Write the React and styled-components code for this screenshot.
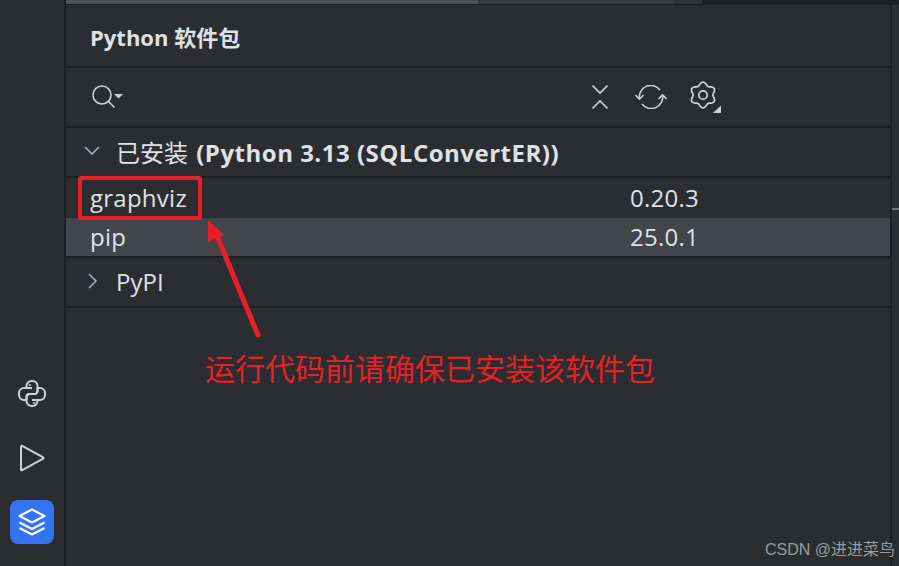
import React from "react";
import styled, { createGlobalStyle } from "styled-components";

const GlobalStyle = createGlobalStyle`
  html, body {
    margin: 0;
    padding: 0;
    background: #2b2d30;
  }
  body {
    width: 899px;
    height: 566px;
    overflow: hidden;
    font-family: "Open Sans", "Noto Sans CJK SC", sans-serif;
  }
`;

const Page = styled.div`
  position: relative;
  display: flex;
  width: 899px;
  height: 566px;
  overflow: hidden;
  background: #2b2d30;
  color: #dfe1e5;
`;

const Rail = styled.nav`
  width: 66px;
  flex: none;
  box-sizing: border-box;
  display: flex;
  flex-direction: column;
  align-items: center;
  gap: 20px;
  padding-bottom: 22px;
  justify-content: flex-end;
  border-right: 2px solid #1e1f22;
`;

const RailButton = styled.div`
  width: 44px;
  height: 44px;
  border-radius: 8px;
  display: flex;
  align-items: center;
  justify-content: center;
  background: ${(p) => (p.$active ? "#3574f0" : "transparent")};
  color: ${(p) => (p.$active ? "#ffffff" : "#ced0d6")};
`;

const Main = styled.main`
  flex: 1;
  display: flex;
  flex-direction: column;
  min-width: 0;
`;

const TopStrip = styled.div`
  height: 5px;
  flex: none;
  display: flex;
  background: #1e1f22;
`;

const StripPart = styled.div`
  width: ${(p) => p.$width}px;
  height: 4px;
  background: ${(p) => p.$color};
`;

const Body = styled.div`
  flex: 1;
  display: flex;
  min-height: 0;
`;

const Panel = styled.section`
  width: 824px;
  flex: none;
  display: flex;
  flex-direction: column;
`;

const Gutter = styled.div`
  flex: 1;
  border-left: 2px solid #1e1f22;
  padding-top: 203px;
`;

const GutterTick = styled.div`
  height: 2px;
  background: #6f737a;
`;

const TitleBar = styled.header`
  height: 63px;
  flex: none;
  box-sizing: border-box;
  display: flex;
  align-items: center;
  padding-left: 24px;
  font-size: 22px;
  font-weight: 700;
  border-bottom: 2px solid #1e1f22;
`;

const Toolbar = styled.div`
  height: 60px;
  flex: none;
  box-sizing: border-box;
  display: flex;
  align-items: center;
  padding: 0 0 0 25px;
  border-bottom: 2px solid #1e1f22;
  color: #ced0d6;
`;

const ToolGroup = styled.div`
  margin-left: auto;
  margin-right: 168px;
  display: flex;
  align-items: center;
`;

const ToolSlot = styled.div`
  display: flex;
  margin-left: ${(p) => p.$gap || 0}px;
`;

const GroupRow = styled.div`
  flex: none;
  box-sizing: border-box;
  height: ${(p) => p.$height}px;
  display: flex;
  align-items: center;
  gap: 15px;
  padding: 0 0 2px 17px;
  font-size: 24px;
  border-bottom: 2px solid #1e1f22;
`;

const GroupName = styled.span`
  font-weight: 400;
  white-space: nowrap;
`;

const GroupDetail = styled.b`
  font-weight: 700;
  letter-spacing: 0.5px;
  margin-left: 2px;
`;

const PackageRow = styled.div`
  flex: none;
  box-sizing: border-box;
  height: ${(p) => p.$height}px;
  display: grid;
  grid-template-columns: 540px 1fr;
  align-items: center;
  padding: 0 0 2px 24px;
  font-size: 24px;
  letter-spacing: 0.25px;
  background: ${(p) => (p.$selected ? "#43454a" : "transparent")};
  border-bottom: ${(p) => (p.$selected ? "2px solid #1e1f22" : "0")};
`;

const Annotations = styled.svg`
  position: absolute;
  left: 0;
  top: 0;
  pointer-events: none;
`;

const Callout = styled.div`
  position: absolute;
  left: 205px;
  top: 347px;
  font-family: "Noto Sans CJK SC", sans-serif;
  font-size: 30px;
  line-height: 40px;
  color: #e81f27;
  white-space: nowrap;
`;

const Watermark = styled.div`
  position: absolute;
  right: 4px;
  top: 540px;
  font-family: "Liberation Sans", "Noto Sans CJK SC", sans-serif;
  font-size: 16px;
  line-height: 20px;
  color: #9a9b9e;
  white-space: nowrap;
`;

// six soft lobes, one pointing straight up
const gearPath = () => {
  const pts = [];
  for (let i = 0; i < 96; i++) {
    const t = (i / 96) * Math.PI * 2;
    const r = 11.4 + 1.5 * Math.cos(6 * t);
    pts.push(`${(13 + r * Math.sin(t)).toFixed(2)} ${(14 - r * Math.cos(t)).toFixed(2)}`);
  }
  return `M${pts.join("L")}z`;
};

const Chevron = ({ open }) => (
  <svg width="18" height="18" viewBox="0 0 18 18" fill="none" stroke="#a8adbd" strokeWidth="1.6">
    {open ? <path d="M2 5l7 7 7-7" /> : <path d="M6 2l7 7-7 7" />}
  </svg>
);

const PythonIcon = () => (
  <svg width="28" height="28" viewBox="0 0 28 28" fill="none" stroke="currentColor" strokeWidth="2" strokeLinejoin="round">
    <path d="M14 8H6a5 5 0 0 0-5 5v2a5 5 0 0 0 5 5h2.500v-3a3 3 0 0 1 3-3h5a3 3 0 0 0 3-3V6a5 5 0 0 0-5-5h-1a5 5 0 0 0-5 5v2" />
    <path d="M14 20h8a5 5 0 0 0 5-5v-2a5 5 0 0 0-5-5h-2.500v3a3 3 0 0 1-3 3h-5a3 3 0 0 0-3 3v4a5 5 0 0 0 5 5h1a5 5 0 0 0 5-5v-2" />
    <circle cx="12" cy="5" r="1.100" fill="currentColor" stroke="none" />
    <circle cx="16" cy="23" r="1.100" fill="currentColor" stroke="none" />
  </svg>
);

const PlayIcon = () => (
  <svg width="30" height="30" viewBox="0 0 30 30" fill="none" stroke="currentColor" strokeWidth="2" strokeLinejoin="round">
    <path d="M4 3.500v23a.8.8 0 0 0 1.200.7l21-11.500a.8.8 0 0 0 0-1.400L5.200 2.800A.8.8 0 0 0 4 3.500z" />
  </svg>
);

const LayersIcon = () => (
  <svg width="28" height="28" viewBox="0 0 28 28" fill="none" stroke="currentColor" strokeWidth="2" strokeLinejoin="round">
    <path d="M14 1.500L26.500 8 14 14.500 1.500 8z" />
    <path d="M1.500 14.500L14 21l12.500-6.500" />
    <path d="M1.500 20L14 26.500 26.500 20" />
  </svg>
);

const SearchIcon = () => (
  <svg width="34" height="26" viewBox="0 0 34 26" fill="none" stroke="currentColor" strokeWidth="1.6">
    <circle cx="11" cy="11" r="9" />
    <path d="M17.500 17.500l6 6" />
    <path d="M23 10h9l-4.500 4.500z" fill="currentColor" stroke="none" />
  </svg>
);

const CollapseIcon = () => (
  <svg width="16" height="24" viewBox="0 0 16 24" fill="none" stroke="currentColor" strokeWidth="1.600">
    <path d="M0.500 0.500L8 8l7.500-7.500" />
    <path d="M0.500 23.500L8 16l7.500 7.500" />
  </svg>
);

const RefreshIcon = () => (
  <svg width="32" height="24" viewBox="0 0 32 24" fill="none" stroke="currentColor" strokeWidth="1.600">
    <path d="M4.500 14A11.500 11.500 0 0 1 25 5" />
    <path d="M0.500 10l4 4 4-4" />
    <path d="M27.500 10A11.500 11.500 0 0 1 7 19" />
    <path d="M23.500 14l4-4 4 4" />
  </svg>
);

const GearIcon = () => (
  <svg width="32" height="32" viewBox="0 0 32 32" fill="none" stroke="currentColor" strokeWidth="1.700">
    <path d={gearPath()} />
    <circle cx="13" cy="14" r="4.200" />
    <path d="M31 24.500V32h-8z" fill="currentColor" stroke="none" />
  </svg>
);

export default function App() {
  return (
    <Page>
      <GlobalStyle />
      <Rail>
        <RailButton><PythonIcon /></RailButton>
        <RailButton><PlayIcon /></RailButton>
        <RailButton $active><LayersIcon /></RailButton>
      </Rail>
      <Main>
        <TopStrip>
          <StripPart $width={412} $color="#4e5157" />
          <StripPart $width={195} $color="#393b40" />
          <StripPart $width={29} $color="#323438" />
        </TopStrip>
        <Body>
          <Panel>
            <TitleBar>Python 软件包</TitleBar>
            <Toolbar>
              <SearchIcon />
              <ToolGroup>
                <ToolSlot><CollapseIcon /></ToolSlot>
                <ToolSlot $gap={27}><RefreshIcon /></ToolSlot>
                <ToolSlot $gap={23}><GearIcon /></ToolSlot>
              </ToolGroup>
            </Toolbar>
            <GroupRow $height={50}>
              <Chevron open />
              <GroupName>已安装 <GroupDetail>(Python 3.13 (SQLConvertER))</GroupDetail></GroupName>
            </GroupRow>
            <PackageRow $height={40}>
              <span>graphviz</span>
              <span>0.20.3</span>
            </PackageRow>
            <PackageRow $height={40} $selected>
              <span>pip</span>
              <span>25.0.1</span>
            </PackageRow>
            <GroupRow $height={50}>
              <Chevron />
              <GroupName>PyPI</GroupName>
            </GroupRow>
          </Panel>
          <Gutter>
            <GutterTick />
          </Gutter>
        </Body>
      </Main>
      <Annotations width="899" height="566" viewBox="0 0 899 566">
        <rect x="80" y="178" width="120" height="40" rx="1" fill="none" stroke="#e81f27" strokeWidth="4" />
        <path d="M217 236L258 335" fill="none" stroke="#e81f27" strokeWidth="5" strokeLinecap="round" />
        <path d="M208 220l16 15-16 7z" fill="#e81f27" />
      </Annotations>
      <Callout>运行代码前请确保已安装该软件包</Callout>
      <Watermark>CSDN @进进菜鸟</Watermark>
    </Page>
  );
}
